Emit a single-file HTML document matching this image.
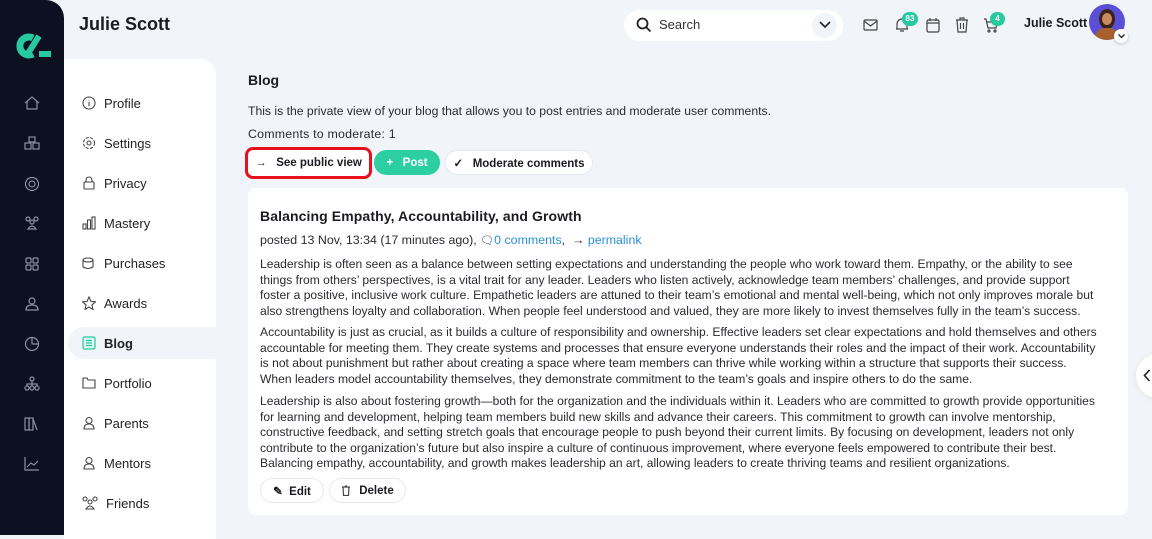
<!DOCTYPE html>
<html><head><meta charset="utf-8"><style>
*{box-sizing:border-box;margin:0;padding:0}
body{width:1152px;height:535px;overflow:hidden;background:#f1f4f9;font-family:"Liberation Sans",sans-serif;color:#1b1b24;position:relative}
.side{position:absolute;left:0;top:0;width:64px;height:535px;background:#0c1020;border-top-right-radius:18px}
.side svg{position:absolute;left:24px}
.sub{position:absolute;left:64px;top:59px;width:152px;height:480px;background:#fff;border-top-right-radius:16px}
.item{position:absolute;left:4px;width:148px;height:32px;display:flex;align-items:center;padding-left:14px;font-size:13px;color:#222}
.item svg{margin-right:8px}
.item.act{background:#f1f4f9;border-radius:16px 0 0 16px;font-weight:bold}
.abs{position:absolute}
.btn{position:absolute;top:150px;height:25px;border-radius:13px;background:#fff;border:1px solid #e6e9f0;font-size:11.5px;font-weight:bold;display:flex;align-items:center;justify-content:center}
.card{position:absolute;left:248px;top:188px;width:880px;height:327px;background:#fff;border-radius:8px}
.p{position:absolute;left:12px;font-size:12.1px;line-height:15.5px;color:#2a2a33;white-space:nowrap;letter-spacing:0}
a{color:#2b8fd8;text-decoration:none}
</style></head><body>
<div class="side">
<svg style="left:11px;top:33px" width="42" height="26" viewBox="0 0 42 26"><path d="M22 5 A9 9 0 1 0 22 21" stroke="#26c9a0" stroke-width="7" fill="none"/><path d="M16 22 L28 3" stroke="#26c9a0" stroke-width="6"/><rect x="28" y="18" width="12" height="6" fill="#26c9a0"/></svg>
<svg style="top:96px" width="16" height="14" viewBox="0 0 16 14" fill="none" stroke="#8a90a8" stroke-width="1.2"><path d="M1 7 L8 1 L15 7 M3 5 V13 H13 V5"/></svg>
<svg style="top:136px" width="16" height="14" fill="none" stroke="#8a90a8" stroke-width="1.2"><rect x="5" y="1" width="6" height="5"/><rect x="1" y="7" width="6" height="6"/><rect x="9" y="7" width="6" height="6"/></svg>
<svg style="top:176px" width="16" height="16" fill="none" stroke="#8a90a8" stroke-width="1.2"><circle cx="8" cy="8" r="6.5"/><circle cx="8" cy="8" r="3"/></svg>
<svg style="top:216px" width="16" height="14" fill="none" stroke="#8a90a8" stroke-width="1.2"><circle cx="4" cy="3" r="2"/><circle cx="12" cy="3" r="2"/><circle cx="8" cy="6" r="2"/><path d="M4 13 Q8 7 12 13Z"/></svg>
<svg style="top:256px" width="16" height="16" fill="none" stroke="#8a90a8" stroke-width="1.2"><rect x="2" y="2" width="5" height="5" rx="1"/><rect x="9" y="2" width="5" height="5" rx="1"/><rect x="2" y="9" width="5" height="5" rx="1"/><rect x="9" y="9" width="5" height="5" rx="1"/></svg>
<svg style="top:296px" width="16" height="16" fill="none" stroke="#8a90a8" stroke-width="1.2"><circle cx="8" cy="5" r="3"/><path d="M2 14 Q2 9 8 9 Q14 9 14 14Z"/></svg>
<svg style="top:336px" width="16" height="16" fill="none" stroke="#8a90a8" stroke-width="1.2"><circle cx="8" cy="8" r="6.5"/><path d="M8 2 V8 H14"/></svg>
<svg style="top:376px" width="16" height="16" fill="none" stroke="#8a90a8" stroke-width="1.2"><circle cx="8" cy="3" r="2"/><circle cx="3" cy="12" r="2"/><circle cx="8" cy="12" r="2"/><circle cx="13" cy="12" r="2"/><path d="M8 5V10M3 10V8H13V10"/></svg>
<svg style="top:416px" width="16" height="16" fill="none" stroke="#8a90a8" stroke-width="1.2"><rect x="1" y="2" width="4" height="12"/><rect x="5" y="2" width="4" height="12"/><path d="M9 3 L13 14"/></svg>
<svg style="top:456px" width="16" height="16" fill="none" stroke="#8a90a8" stroke-width="1.2"><path d="M1 1V14H15M3 11L7 7L10 9L14 5"/></svg>
</div>
<div class="abs" style="left:79px;top:14px;font-size:18px;font-weight:bold">Julie Scott</div>
<div class="sub">
<div class="item" style="top:28px"><svg width="14" height="14" fill="none" stroke="#444" stroke-width="1.1"><circle cx="7" cy="7" r="6"/><path d="M7 6V10M7 4V4.5"/></svg>Profile</div>
<div class="item" style="top:68px"><svg width="14" height="14" fill="none" stroke="#444" stroke-width="1.1"><circle cx="7" cy="7" r="5.5" stroke-dasharray="3 1.5"/><circle cx="7" cy="7" r="2"/></svg>Settings</div>
<div class="item" style="top:108px"><svg width="14" height="14" fill="none" stroke="#444" stroke-width="1.1"><rect x="2" y="6" width="10" height="7" rx="1"/><path d="M4 6V4a3 3 0 0 1 6 0V6"/></svg>Privacy</div>
<div class="item" style="top:148px"><svg width="14" height="14" fill="none" stroke="#444" stroke-width="1.1"><rect x="1" y="8" width="3" height="5"/><rect x="5.5" y="4" width="3" height="9"/><rect x="10" y="1" width="3" height="12"/></svg>Mastery</div>
<div class="item" style="top:188px"><svg width="14" height="14" fill="none" stroke="#444" stroke-width="1.1"><ellipse cx="6" cy="4" rx="5" ry="2"/><path d="M1 4V11Q6 14 11 11V4"/></svg>Purchases</div>
<div class="item" style="top:228px"><svg width="14" height="14" fill="none" stroke="#444" stroke-width="1.1"><path d="M7 1L9 5.5L13.5 5.8L10 9L11 13.5L7 11L3 13.5L4 9L0.5 5.8L5 5.5Z"/></svg>Awards</div>
<div class="item act" style="top:268px"><svg width="14" height="14" fill="none" stroke="#26c9a0" stroke-width="1.2"><rect x="1" y="1" width="12" height="12" rx="1.5" fill="#dff7f0"/><path d="M4 4.5H10M4 7H10M4 9.5H10"/></svg>Blog</div>
<div class="item" style="top:308px"><svg width="14" height="14" fill="none" stroke="#444" stroke-width="1.1"><path d="M1 2H5L6 4H13V12H1Z"/></svg>Portfolio</div>
<div class="item" style="top:348px"><svg width="14" height="14" fill="none" stroke="#444" stroke-width="1.1"><circle cx="7" cy="4.5" r="3"/><path d="M2 13Q2 8 7 8Q12 8 12 13Z"/></svg>Parents</div>
<div class="item" style="top:388px"><svg width="14" height="14" fill="none" stroke="#444" stroke-width="1.1"><circle cx="7" cy="4.5" r="3"/><path d="M2 13Q2 8 7 8Q12 8 12 13Z"/></svg>Mentors</div>
<div class="item" style="top:428px"><svg width="16" height="14" fill="none" stroke="#444" stroke-width="1.1"><circle cx="3" cy="3" r="2"/><circle cx="13" cy="3" r="2"/><circle cx="8" cy="6" r="2"/><path d="M4 13Q8 7 12 13Z"/></svg>Friends</div>
</div>
<!-- top bar -->
<div class="abs" style="left:624px;top:10px;width:219px;height:31px;background:#fff;border-radius:16px"></div>
<svg class="abs" style="left:636px;top:17px" width="16" height="16" fill="none" stroke="#222" stroke-width="1.8"><circle cx="6.5" cy="6.5" r="5"/><path d="M10 10L14.5 14.5"/></svg>
<div class="abs" style="left:659px;top:17px;font-size:13px;color:#333">Search</div>
<div class="abs" style="left:812px;top:13px;width:25px;height:25px;border-radius:50%;background:#f1f4f9"></div>
<svg class="abs" style="left:819px;top:21px" width="12" height="8" fill="none" stroke="#222" stroke-width="1.6"><path d="M1 1L6 6L11 1"/></svg>
<svg class="abs" style="left:863px;top:19px" width="15" height="12" fill="none" stroke="#444" stroke-width="1.2"><rect x="1" y="1" width="13" height="10" rx="1"/><path d="M1 2L7.5 7L14 2"/></svg>
<svg class="abs" style="left:895px;top:17px" width="14" height="16" fill="none" stroke="#444" stroke-width="1.2"><path d="M2 12V7a5 5 0 0 1 10 0V12H1M13 12H12M5 14H9"/></svg>
<div class="abs" style="left:902px;top:12px;width:16px;height:14px;border-radius:7px;background:#26c9a0;color:#fff;font-size:8px;font-weight:bold;text-align:center;line-height:14px">83</div>
<svg class="abs" style="left:926px;top:17px" width="14" height="16" fill="none" stroke="#444" stroke-width="1.2"><rect x="1" y="3" width="12" height="12" rx="1.5"/><path d="M4 1V4M10 1V4M1 6H13"/></svg>
<svg class="abs" style="left:955px;top:17px" width="14" height="16" fill="none" stroke="#444" stroke-width="1.2"><path d="M1 3H13M5 3V1H9V3M2 3L3 15H11L12 3M5.5 6V12M8.5 6V12"/></svg>
<svg class="abs" style="left:983px;top:17px" width="16" height="16" fill="none" stroke="#444" stroke-width="1.2"><path d="M1 2H3L5 11H13L14 5H4"/><circle cx="6" cy="14" r="1"/><circle cx="12" cy="14" r="1"/></svg>
<div class="abs" style="left:990px;top:12px;width:15px;height:14px;border-radius:7px;background:#26c9a0;color:#fff;font-size:8px;font-weight:bold;text-align:center;line-height:14px">4</div>
<div class="abs" style="left:1024px;top:16px;font-size:12.5px;font-weight:bold">Julie Scott</div>
<div class="abs" style="left:1089px;top:4px;width:36px;height:36px;border-radius:50%;background:#5a4fd6;overflow:hidden"><div style="position:absolute;left:10px;top:5px;width:16px;height:20px;border-radius:50%;background:#3a2218"></div><div style="position:absolute;left:13px;top:9px;width:10px;height:12px;border-radius:50%;background:#c98a62"></div><div style="position:absolute;left:6px;top:24px;width:24px;height:16px;border-radius:10px 10px 0 0;background:#a8602e"></div></div>
<div class="abs" style="left:1114px;top:29px;width:14px;height:14px;border-radius:50%;background:#fff;box-shadow:0 1px 3px rgba(0,0,0,.2)"></div>
<svg class="abs" style="left:1118px;top:34px" width="7" height="5" fill="none" stroke="#222" stroke-width="1.3"><path d="M0.5 0.5L3.5 3.5L6.5 0.5"/></svg>
<!-- main -->
<div class="abs" style="left:248px;top:72px;font-size:14px;font-weight:bold">Blog</div>
<div class="abs" style="left:248px;top:104px;font-size:12.2px;color:#2a2a33">This is the private view of your blog that allows you to post entries and moderate user comments.</div>
<div class="abs" style="left:248px;top:127px;font-size:12.4px;letter-spacing:0.2px;color:#2a2a33">Comments to moderate: 1</div>
<div class="btn" style="left:245px;width:127px;border:3px solid #e8101c;border-radius:8px;top:147px;height:32px">→&nbsp;&nbsp;&nbsp;See public view</div>
<div class="btn" style="left:374px;width:66px;background:#2ccfa2;border-color:#2ccfa2;color:#fff">+&nbsp;&nbsp;&nbsp;Post</div>
<div class="btn" style="left:445px;width:148px">✓&nbsp;&nbsp;&nbsp;Moderate comments</div>
<div class="card">
<div class="abs" style="left:12px;top:20px;font-size:14px;font-weight:bold;letter-spacing:0.1px">Balancing Empathy, Accountability, and Growth</div>
<div class="p" style="top:45px;font-size:12.4px">posted 13 Nov, 13:34 (17 minutes ago), <span style="font-size:11px">🗨</span><a>0 comments</a>,&nbsp; → <a>permalink</a></div>
<div class="p" style="top:69px">Leadership is often seen as a balance between setting expectations and understanding the people who work toward them. Empathy, or the ability to see<br>things from others’ perspectives, is a vital trait for any leader. Leaders who listen actively, acknowledge team members’ challenges, and provide support<br>foster a positive, inclusive work culture. Empathetic leaders are attuned to their team’s emotional and mental well-being, which not only improves morale but<br>also strengthens loyalty and collaboration. When people feel understood and valued, they are more likely to invest themselves fully in the team’s success.</div>
<div class="p" style="top:137px">Accountability is just as crucial, as it builds a culture of responsibility and ownership. Effective leaders set clear expectations and hold themselves and others<br>accountable for meeting them. They create systems and processes that ensure everyone understands their roles and the impact of their work. Accountability<br>is not about punishment but rather about creating a space where team members can thrive while working within a structure that supports their success.<br>When leaders model accountability themselves, they demonstrate commitment to the team’s goals and inspire others to do the same.</div>
<div class="p" style="top:206px">Leadership is also about fostering growth—both for the organization and the individuals within it. Leaders who are committed to growth provide opportunities<br>for learning and development, helping team members build new skills and advance their careers. This commitment to growth can involve mentorship,<br>constructive feedback, and setting stretch goals that encourage people to push beyond their current limits. By focusing on development, leaders not only<br>contribute to the organization’s future but also inspire a culture of continuous improvement, where everyone feels empowered to contribute their best.<br>Balancing empathy, accountability, and growth makes leadership an art, allowing leaders to create thriving teams and resilient organizations.</div>
<div class="btn" style="left:12px;top:290px;width:64px">✎&nbsp;&nbsp;Edit</div>
<div class="btn" style="left:81px;top:290px;width:77px"><svg width="10" height="11" fill="none" stroke="#444" stroke-width="1.2" style="margin-right:8px"><path d="M1 2H9M2 2L2.5 10.5H7.5L8 2M4 1H6"/></svg>Delete</div>
</div>
<div class="abs" style="left:1136px;top:354px;width:44px;height:44px;border-radius:50%;background:#fff;box-shadow:0 1px 6px rgba(0,0,0,.08)"></div>
<svg class="abs" style="left:1143px;top:369px" width="8" height="13" fill="none" stroke="#222" stroke-width="1.6"><path d="M6.5 1L1.5 6.5L6.5 12"/></svg>
</body></html>
